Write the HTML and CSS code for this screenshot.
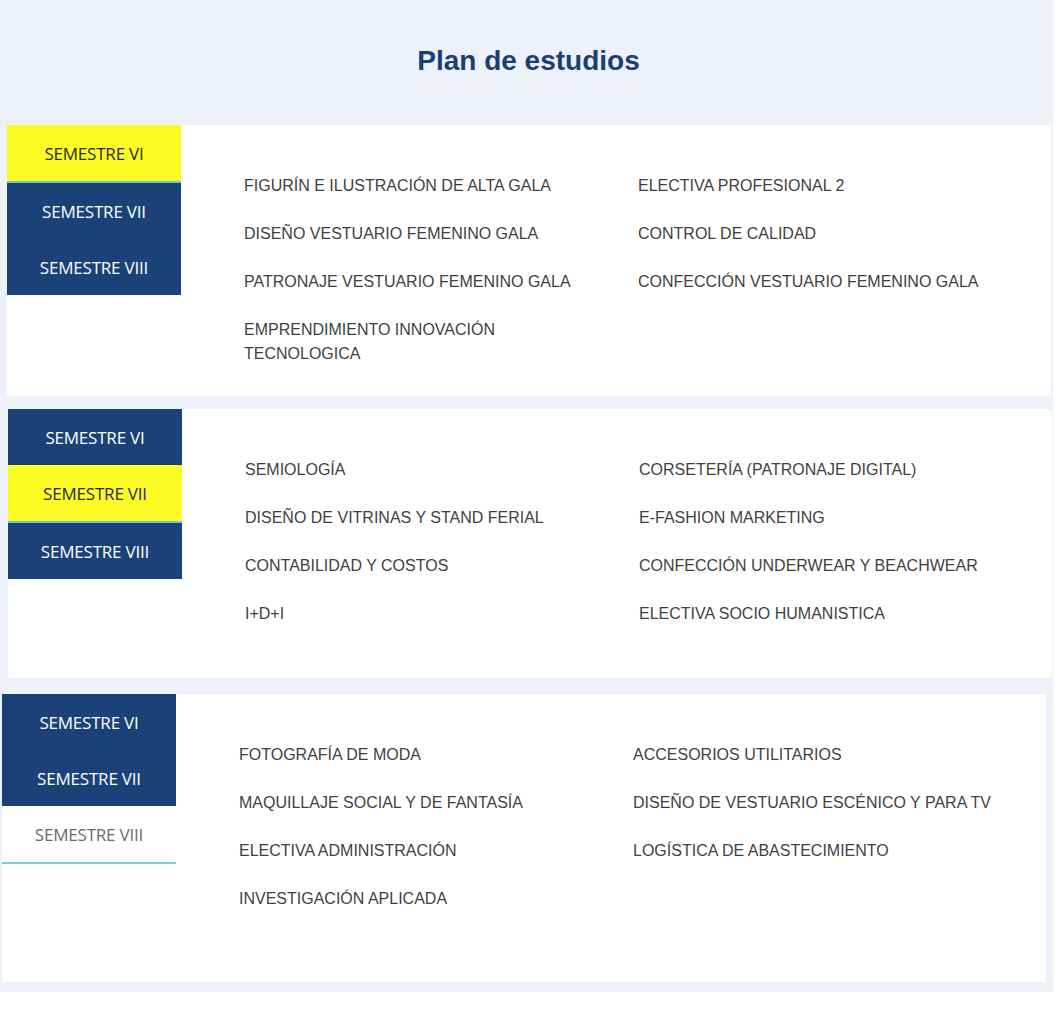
FILE: index.html
```html
<!DOCTYPE html>
<html lang="es">
<head>
    <meta charset="UTF-8">
    <meta name="viewport" content="width=device-width, initial-scale=1.0">
    <title>Plan de estudios</title>
    <link rel="stylesheet" href="styles.css">
</head>
<body>
    <div class="page">
        <header class="page-header">
            <h2>Plan de estudios</h2>
        </header>

        <section class="panel panel-one">
            <nav class="tabs">
                <div class="tab tab-active">SEMESTRE VI</div>
                <div class="tab">SEMESTRE VII</div>
                <div class="tab">SEMESTRE VIII</div>
            </nav>
            <div class="subjects">
                <ul>
                    <li>FIGURÍN E ILUSTRACIÓN DE ALTA GALA</li>
                    <li>DISEÑO VESTUARIO FEMENINO GALA</li>
                    <li>PATRONAJE VESTUARIO FEMENINO GALA</li>
                    <li>EMPRENDIMIENTO INNOVACIÓN TECNOLOGICA</li>
                </ul>
                <ul>
                    <li>ELECTIVA PROFESIONAL 2</li>
                    <li>CONTROL DE CALIDAD</li>
                    <li>CONFECCIÓN VESTUARIO FEMENINO GALA</li>
                </ul>
            </div>
        </section>

        <section class="panel panel-two">
            <nav class="tabs">
                <div class="tab">SEMESTRE VI</div>
                <div class="tab tab-active">SEMESTRE VII</div>
                <div class="tab">SEMESTRE VIII</div>
            </nav>
            <div class="subjects">
                <ul>
                    <li>SEMIOLOGÍA</li>
                    <li>DISEÑO DE VITRINAS Y STAND FERIAL</li>
                    <li>CONTABILIDAD Y COSTOS</li>
                    <li>I+D+I</li>
                </ul>
                <ul>
                    <li>CORSETERÍA (PATRONAJE DIGITAL)</li>
                    <li>E-FASHION MARKETING</li>
                    <li>CONFECCIÓN UNDERWEAR Y BEACHWEAR</li>
                    <li>ELECTIVA SOCIO HUMANISTICA</li>
                </ul>
            </div>
        </section>

        <section class="panel panel-three">
            <nav class="tabs">
                <div class="tab">SEMESTRE VI</div>
                <div class="tab">SEMESTRE VII</div>
                <div class="tab tab-plain">SEMESTRE VIII</div>
            </nav>
            <div class="subjects">
                <ul>
                    <li>FOTOGRAFÍA DE MODA</li>
                    <li>MAQUILLAJE SOCIAL Y DE FANTASÍA</li>
                    <li>ELECTIVA ADMINISTRACIÓN</li>
                    <li>INVESTIGACIÓN APLICADA</li>
                </ul>
                <ul>
                    <li>ACCESORIOS UTILITARIOS</li>
                    <li>DISEÑO DE VESTUARIO ESCÉNICO Y PARA TV</li>
                    <li>LOGÍSTICA DE ABASTECIMIENTO</li>
                </ul>
            </div>
        </section>
    </div>
</body>
</html>
```

FILE: styles.css
```css
body {
    margin: 0;
    background-color: #ffffff;
    font-family: "Liberation Sans", Arial, sans-serif;
}
.page {
    width: 1053px;
    background-color: #edf1f9;
    padding-bottom: 10px;
}
.page-header {
    height: 122px;
    padding-bottom: 3px;
    display: flex;
    align-items: center;
    justify-content: center;
}
.page-header h2 {
    margin: 0;
    padding-left: 4px;
    color: #1b3f73;
    font-size: 28px;
    font-weight: bold;
}
.panel {
    display: flex;
    width: 1044px;
    background: #ffffff;
}
.panel-one {
    margin-left: 7px;
    height: 271px;
}
.panel-two {
    margin-left: 8px;
    margin-top: 13px;
    height: 269px;
}
.panel-three {
    margin-left: 2px;
    margin-top: 16px;
    height: 288px;
}
.tabs {
    width: 174px;
    align-self: flex-start;
    font-family: "Open Sans", "Noto Sans", sans-serif;
}
.tab {
    height: 56px;
    display: flex;
    align-items: center;
    justify-content: center;
    background-color: #1a4178;
    color: #ffffff;
    font-size: 17px;
    letter-spacing: -0.2px;
}
.tab-active {
    background-color: #fcfc24;
    color: #2b2b2b;
    border-bottom: 2px solid #72c6cf;
}
.tab-plain {
    background-color: #ffffff;
    color: #6a6a6a;
    border-bottom: 2px solid #7ccbe0;
}
.subjects {
    display: flex;
    padding-left: 63px;
    padding-top: 49px;
}
.subjects ul {
    list-style: none;
    margin: 0;
    padding: 0;
    width: 394px;
}
.subjects li {
    width: 366px;
    margin-bottom: 24px;
    color: #3f3f3f;
    font-size: 16px;
    line-height: 24px;
}
```
